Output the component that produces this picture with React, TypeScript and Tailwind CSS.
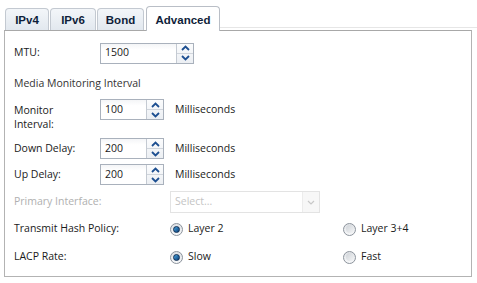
import React from "react";

const font = { fontFamily: '"Open Sans", "Noto Sans", sans-serif' };
const tabFont = { fontFamily: '"Liberation Sans", Arial, sans-serif' };

function Tab({ label, active, w }: { label: string; active?: boolean; w: number }) {
  if (active) {
    return (
      <div className="relative z-10 h-[25px] mb-[-1px] flex justify-center items-start pt-[5px] border border-b-0 border-[#b9bec6] rounded-t-[4px] bg-white text-[11.5px] font-bold text-[#0f1e3a]" style={{ ...tabFont, width: w }}>
        {label}
      </div>
    );
  }
  return (
    <div className="h-[22px] flex justify-center items-start pt-[3px] border border-b-0 border-[#c3c9d1] rounded-t-[4px] bg-gradient-to-b from-[#f3f6f9] to-[#e2e8ef] text-[11.5px] font-bold text-[#0f1e3a]" style={{ ...tabFont, width: w }}>
      {label}
    </div>
  );
}

function Spin({ value, w }: { value: string; w: number }) {
  return (
    <div className="flex h-[21px] border border-[#a9b1bc] bg-white" style={{ width: w }}>
      <div className="flex-1 flex items-center pl-[4px] text-[10.5px] text-[#1a1a1a] bg-gradient-to-b from-[#f4f5f7] to-white to-[30%]">{value}</div>
      <div className="w-[17px] border-l border-[#c4cad2] flex flex-col bg-gradient-to-b from-[#fbfcfd] to-[#eceff3]">
        <div className="flex-1 flex items-center justify-center border-b border-[#d0d5dc]">
          <svg width="9" height="6" viewBox="0 0 9 6"><path d="M1 5 L4.5 1.5 L8 5" fill="none" stroke="#1d4f91" strokeWidth="1.8" /></svg>
        </div>
        <div className="flex-1 flex items-center justify-center">
          <svg width="9" height="6" viewBox="0 0 9 6"><path d="M1 1 L4.5 4.5 L8 1" fill="none" stroke="#1d4f91" strokeWidth="1.8" /></svg>
        </div>
      </div>
    </div>
  );
}

function Radio({ checked, label }: { checked?: boolean; label: string }) {
  return (
    <div className="flex items-center gap-[5px]">
      <div className="w-[13px] h-[13px] rounded-full border border-[#8c939c] bg-gradient-to-b from-[#dfe2e6] to-[#f7f8f9] flex items-center justify-center">
        {checked ? (
          <div className="w-[7px] h-[7px] rounded-full bg-gradient-to-br from-[#4aa6e0] to-[#0c3f78] border border-[#0d2c52]" />
        ) : (
          <div className="w-[8px] h-[8px] rounded-full bg-gradient-to-br from-[#cfd3d8] to-[#f4f5f6]" />
        )}
      </div>
      <span className="text-[10.5px] text-[#1a1a1a]">{label}</span>
    </div>
  );
}

export default function App() {
  return (
    <div className="w-[477px] h-[283px] bg-white text-[10.5px]" style={font}>
      <div className="flex items-end pl-[5px] h-[30px] relative">
        <Tab label="IPv4" w={44} />
        <div className="w-[1px]" />
        <Tab label="IPv6" w={46} />
        <div className="w-[1px]" />
        <Tab label="Bond" w={47} />
        <div className="w-[2px]" />
        <Tab label="Advanced" active w={74} />
        <div className="flex-1 self-end h-[3px] border-b border-[#e6e6e6] mb-[2px]" />
      </div>
      <div className="ml-[4px] w-[468px] h-[247px] border border-[#b3b3b3] border-t-[#a8a8a8] pl-[9px]">
        <div className="flex items-center h-[22px] mt-[11px]">
          <div className="w-[86px] text-[#1a1a1a]">MTU:</div>
          <Spin value="1500" w={94} />
        </div>
        <div className="mt-[12px] h-[14px] leading-[14px] text-[#333]">Media Monitoring Interval</div>
        <div className="flex items-start mt-[9px] h-[32px]">
          <div className="w-[86px] pt-[4px] leading-[14px] text-[#1a1a1a]">Monitor<br />Interval:</div>
          <Spin value="100" w={64} />
          <div className="ml-[11px] h-[21px] flex items-center text-[#1a1a1a]">Milliseconds</div>
        </div>
        <div className="flex items-center mt-[7px] h-[21px]">
          <div className="w-[86px] text-[#1a1a1a]">Down Delay:</div>
          <Spin value="200" w={64} />
          <div className="ml-[11px] text-[#1a1a1a]">Milliseconds</div>
        </div>
        <div className="flex items-center mt-[5px] h-[21px]">
          <div className="w-[86px] text-[#1a1a1a]">Up Delay:</div>
          <Spin value="200" w={64} />
          <div className="ml-[11px] text-[#1a1a1a]">Milliseconds</div>
        </div>
        <div className="flex items-center mt-[6px] h-[22px]">
          <div className="w-[156px] text-[#b0b0b0]">Primary Interface:</div>
          <div className="flex w-[150px] h-[22px] border border-[#e3e3e3] bg-white">
            <div className="flex-1 flex items-center pl-[4px] text-[#c4c4c4]">Select...</div>
            <div className="w-[17px] border-l border-[#ececec] bg-[#f7f7f7] flex items-center justify-center">
              <svg width="8" height="5" viewBox="0 0 8 5"><path d="M1 1 L4 4 L7 1" fill="none" stroke="#c8c8c8" strokeWidth="1.2" /></svg>
            </div>
          </div>
        </div>
        <div className="flex items-center mt-[8px] h-[16px]">
          <div className="w-[156px] text-[#1a1a1a]">Transmit Hash Policy:</div>
          <div className="w-[173px]"><Radio checked label="Layer 2" /></div>
          <Radio label="Layer 3+4" />
        </div>
        <div className="flex items-center mt-[12px] h-[16px]">
          <div className="w-[156px] text-[#1a1a1a]">LACP Rate:</div>
          <div className="w-[173px]"><Radio checked label="Slow" /></div>
          <Radio label="Fast" />
        </div>
      </div>
    </div>
  );
}
